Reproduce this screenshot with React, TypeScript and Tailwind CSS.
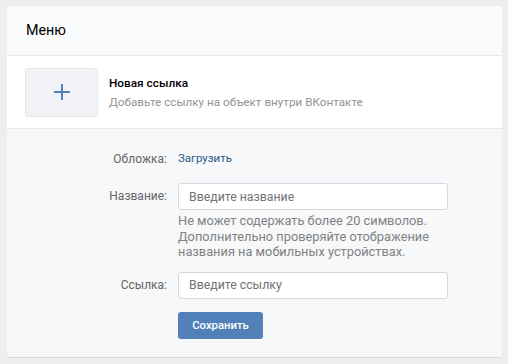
import React from 'react';

const font = { fontFamily: 'Roboto, "Open Sans", Arial, sans-serif' };

const FieldRow: React.FC<{ label: string; children: React.ReactNode; className?: string }> = ({
  label,
  children,
  className = '',
}) => (
  <div className={`flex items-start ${className}`}>
    <div className="w-[160px] shrink-0 h-[26px] flex items-center justify-end text-[12px] text-[#656565]">
      {label}
    </div>
    <div className="ml-[11px]">{children}</div>
  </div>
);

export default function App() {
  return (
    <div className="w-[508px] h-[364px] bg-[#edeef0] pt-[6px] pl-[7px] pr-[6px]" style={font}>
      <div className="w-[495px] h-[351px] bg-white rounded-[2px] shadow-[0_1px_0_0_#d7d8db] flex flex-col overflow-hidden">
        {/* Header */}
        <div className="h-[50px] shrink-0 bg-[#fafbfc] border-b border-[#e7e8ec] flex items-center pl-[19px] text-[14.3px] text-black">
          Меню
        </div>

        {/* New link */}
        <div className="h-[73px] shrink-0 bg-white border-b border-[#e7e8ec] flex items-center pl-[18px]">
          <div className="w-[73px] h-[49px] rounded-[3px] bg-[#f0f2f5] border border-[#e4e6ea] flex items-center justify-center">
            <svg width="18" height="18" viewBox="0 0 18 18">
              <path d="M9 1v16M1 9h16" stroke="#5181b8" strokeWidth="2" />
            </svg>
          </div>
          <div className="ml-[11px] flex flex-col">
            <span className="text-[11.8px] font-medium text-black leading-[18px]">Новая ссылка</span>
            <span className="text-[11.7px] text-[#939393] leading-[18px] mt-[1px]">
              Добавьте ссылку на объект внутри ВКонтакте
            </span>
          </div>
        </div>

        {/* Form */}
        <div className="flex-1 bg-[#f7f8fa] pt-[17px]">
          <FieldRow label="Обложка:">
            <div className="h-[26px] flex items-center text-[11.5px] text-[#2a5885]">Загрузить</div>
          </FieldRow>

          <FieldRow label="Название:" className="mt-[11px]">
            <input
              placeholder="Введите название"
              className="w-[270px] h-[27px] bg-white border border-[#d3d9de] rounded-[3px] px-[10px] text-[12.3px] text-black placeholder:text-[#727272] outline-none"
            />
            <div className="mt-[3px] text-[12.8px] leading-[15.5px] text-[#828282] w-[280px]">
              Не может содержать более 20 символов.
              <br />
              Дополнительно проверяйте отображение
              <br />
              названия на мобильных устройствах.
            </div>
          </FieldRow>

          <FieldRow label="Ссылка:" className="mt-[12px]">
            <input
              placeholder="Введите ссылку"
              className="w-[270px] h-[27px] bg-white border border-[#d3d9de] rounded-[3px] px-[10px] text-[12.3px] text-black placeholder:text-[#727272] outline-none"
            />
          </FieldRow>

          <div className="ml-[171px] mt-[13px]">
            <button className="w-[85px] h-[27px] rounded-[3px] bg-[#5181b8] text-white text-[11.3px] font-medium">
              Сохранить
            </button>
          </div>
        </div>
      </div>
    </div>
  );
}
